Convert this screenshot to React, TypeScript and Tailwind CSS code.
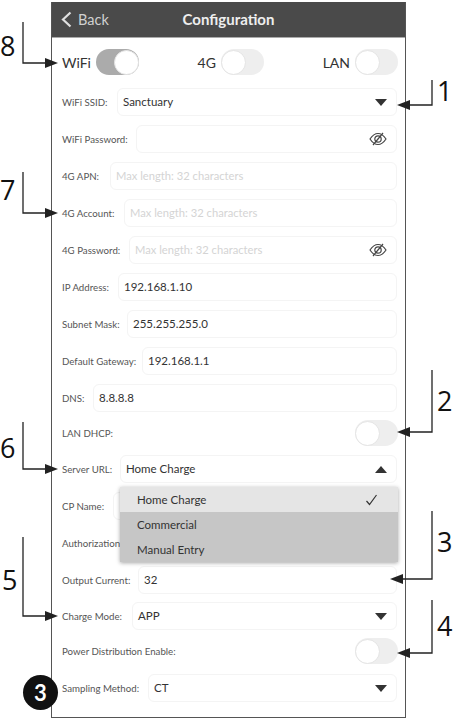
import React from "react";

const font = { fontFamily: '"Lato", "Open Sans", sans-serif' };

function Eye() {
  return (
    <svg width="18" height="14" viewBox="0 0 18 14" fill="none" stroke="#444" strokeWidth="1.2" className="shrink-0">
      <path d="M1 7 C4 2.5 6.5 1.5 9 1.5 C11.5 1.5 14 2.5 17 7 C14 11.5 11.5 12.5 9 12.5 C6.5 12.5 4 11.5 1 7 Z" />
      <circle cx="9" cy="7" r="3.2" />
      <path d="M14 1 L4 13" />
    </svg>
  );
}

function Caret({ up }: { up?: boolean }) {
  return (
    <svg width="12" height="7" viewBox="0 0 12 7" className="shrink-0">
      <path d={up ? "M6 0 L12 7 L0 7 Z" : "M0 0 L12 0 L6 7 Z"} fill="#333" />
    </svg>
  );
}

function Toggle({ on }: { on?: boolean }) {
  return (
    <div className={on ? "w-[43px] h-[26px] rounded-full bg-[#ababab] flex items-center justify-end" : "w-[43px] h-[26px] rounded-full bg-[#eeeeee] flex items-center justify-start"}>
      <div className="w-[25px] h-[25px] rounded-full bg-white border border-[#e4e4e4]" />
    </div>
  );
}

function Field({ label, w, value, placeholder, right }: { label: string; w: string; value?: string; placeholder?: string; right?: React.ReactNode }) {
  return (
    <div className="flex items-center h-[28px]">
      <div className={`${w} shrink-0 text-[9.7px] text-[#555] whitespace-nowrap`}>{label}</div>
      <div className="flex-1 h-[28px] rounded-md border border-[#f4f4f4] flex items-center justify-between pl-[5px] pr-[9px]">
        {value ? <span className="text-[11.5px] text-[#333]">{value}</span> : <span className="text-[11.2px] text-[#d4d4d4]">{placeholder}</span>}
        {right}
      </div>
    </div>
  );
}

function Arrows() {
  const head = (x: number, y: number, dir: number) => `${x},${y} ${x + dir * 13},${y - 5} ${x + dir * 13},${y + 5}`;
  const left = [
    [22, 63, 58],
    [172, 213, 58],
    [422, 469, 58],
    [537, 616, 58],
  ];
  const right = [
    [80, 105, 397],
    [370, 432, 397],
    [511, 579, 390],
    [600, 653, 397],
  ];
  return (
    <svg width="453" height="720" className="absolute top-0 left-0 pointer-events-none">
      {left.map(([a, b, t]) => (
        <g key={a}>
          <path d={`M23 ${a} V${b} H${t - 8}`} fill="none" stroke="#222" strokeWidth="1.3" />
          <polygon points={head(t, b, -1)} fill="#222" />
        </g>
      ))}
      {right.map(([a, b, t]) => (
        <g key={a}>
          <path d={`M432 ${a} V${b} H${t + 8}`} fill="none" stroke="#222" strokeWidth="1.3" />
          <polygon points={head(t, b, 1)} fill="#222" />
        </g>
      ))}
    </svg>
  );
}

function Num({ n, cls }: { n: string; cls: string }) {
  return <div className={`absolute text-[27px] leading-[32px] text-[#111] ${cls}`} style={{ fontFamily: '"Open Sans", sans-serif' }}>{n}</div>;
}

export default function App() {
  return (
    <div className="relative w-[453px] h-[720px] bg-white overflow-hidden pt-[2px] pl-[51px]" style={font}>
      <div className="relative w-[355px] h-[716px] border border-[#555] border-t-0 flex flex-col">
        <div className="relative h-[36px] bg-[#4a4a4a] border-b border-[#aaa] flex items-center justify-center shrink-0">
          <div className="absolute left-[9px] top-0 h-full flex items-center gap-[6px]">
            <svg width="11" height="17" viewBox="0 0 11 17" fill="none" stroke="#e0e0e0" strokeWidth="2.2"><path d="M9.5 1.5 L2 8.5 L9.5 15.5" /></svg>
            <span className="text-[14.5px] text-[#d0d0d0]">Back</span>
          </div>
          <span className="text-[15px] font-bold text-[#eeeeee]">Configuration</span>
        </div>

        <div className="flex flex-col pl-[10px] pr-[8px] pt-[11px]">
          <div className="flex items-center justify-between h-[26px] mb-[13px] mr-[-1px]">
            <div className="flex items-center gap-[5px]"><span className="text-[14px] text-[#333]">WiFi</span><Toggle on /></div>
            <div className="flex items-center gap-[5px]"><span className="text-[14px] text-[#333]">4G</span><Toggle /></div>
            <div className="flex items-center gap-[5px]"><span className="text-[14px] text-[#333]">LAN</span><Toggle /></div>
          </div>
          <div className="flex flex-col gap-[9px]">
            <Field label="WiFi SSID:" w="w-[55px]" value="Sanctuary" right={<Caret />} />
            <Field label="WiFi Password:" w="w-[74px]" right={<Eye />} />
            <Field label="4G APN:" w="w-[48px]" placeholder="Max length: 32 characters" />
            <Field label="4G Account:" w="w-[62px]" placeholder="Max length: 32 characters" />
            <Field label="4G Password:" w="w-[67px]" placeholder="Max length: 32 characters" right={<Eye />} />
            <Field label="IP Address:" w="w-[56px]" value="192.168.1.10" />
            <Field label="Subnet Mask:" w="w-[65px]" value="255.255.255.0" />
            <Field label="Default Gateway:" w="w-[80px]" value="192.168.1.1" />
            <Field label="DNS:" w="w-[31px]" value="8.8.8.8" />
          </div>
          <div className="flex items-center justify-between h-[26px] mt-[8px] mb-[9px] mr-[-1px]">
            <span className="text-[9.7px] text-[#555]">LAN DHCP:</span>
            <Toggle />
          </div>
          <div className="relative flex flex-col gap-[9px]">
            <Field label="Server URL:" w="w-[58px]" value="Home Charge" right={<Caret up />} />
            <Field label="CP Name:" w="w-[51px]" />
            <Field label="Authorization" w="w-[58px]" />
            <Field label="Output Current:" w="w-[76px]" value="32" />
            <div className="mt-[-1px]">
              <Field label="Charge Mode:" w="w-[70px]" value="APP" right={<Caret />} />
            </div>
            <div className="absolute left-[58px] right-[-1px] top-[32px] h-[75px] shadow-[0_1px_4px_rgba(0,0,0,0.35)] flex flex-col text-[11.5px] text-[#333]">
              <div className="h-[25px] bg-[#e5e5e5] flex items-center justify-between pl-[17px] pr-[20px]">
                <span>Home Charge</span>
                <svg width="13" height="12" viewBox="0 0 13 12" fill="none" stroke="#333" strokeWidth="1.2"><path d="M1.5 7 L4.5 10.5 L11.5 1" /></svg>
              </div>
              <div className="h-[25px] bg-[#c6c6c6] flex items-center pl-[17px]">Commercial</div>
              <div className="h-[25px] bg-[#c6c6c6] flex items-center pl-[17px]">Manual Entry</div>
            </div>
          </div>
          <div className="flex items-center justify-between h-[26px] mt-[8px] mb-[10px] mr-[-1px]">
            <span className="text-[9.7px] text-[#555]">Power Distribution Enable:</span>
            <Toggle />
          </div>
          <Field label="Sampling Method:" w="w-[86px]" value="CT" right={<Caret />} />
        </div>
      </div>

      <Arrows />
      <Num n="8" cls="left-[0px] top-[30px]" />
      <Num n="1" cls="left-[437px] top-[75px]" />
      <Num n="7" cls="left-[0px] top-[174px]" />
      <Num n="2" cls="left-[437px] top-[385px]" />
      <Num n="6" cls="left-[0px] top-[432px]" />
      <Num n="3" cls="left-[437px] top-[526px]" />
      <Num n="5" cls="left-[2px] top-[564px]" />
      <Num n="4" cls="left-[437px] top-[610px]" />
      <div className="absolute left-[23px] top-[675px] w-[35px] h-[35px] rounded-full bg-[#111] text-white font-bold text-[22px] flex items-center justify-center">3</div>
    </div>
  );
}
